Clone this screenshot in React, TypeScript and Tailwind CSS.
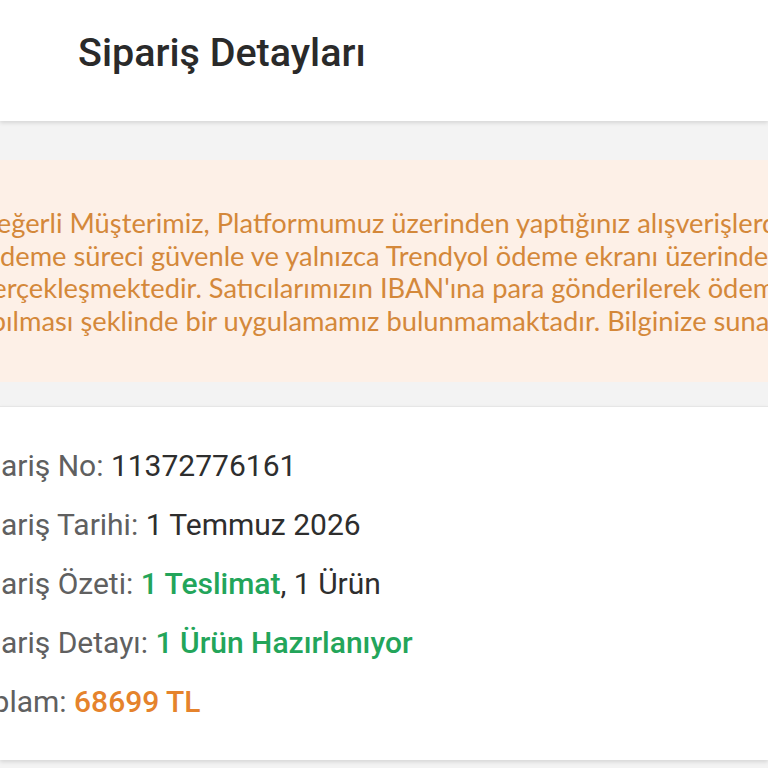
import React from 'react'

const rows = [
  { label: 'Sipariş No:', value: <span className="text-[#2e2e2e]">11372776161</span> },
  { label: 'Sipariş Tarihi:', value: <span className="text-[#2e2e2e]">1 Temmuz 2026</span> },
  {
    label: 'Sipariş Özeti:',
    value: (
      <>
        <span className="font-medium text-[#23a55a]">1 Teslimat</span>
        <span className="text-[#2e2e2e]">, 1 Ürün</span>
      </>
    ),
  },
  { label: 'Sipariş Detayı:', value: <span className="font-medium text-[#23a55a]">1 Ürün Hazırlanıyor</span> },
  { label: 'Toplam:', value: <span className="font-medium text-[#e5832c]">68699 TL</span> },
]

export default function App() {
  return (
    <div className="h-[768px] w-[768px] overflow-hidden bg-[#f3f3f3] font-['Roboto',sans-serif]">
      <header className="flex h-[121px] items-center bg-white pb-[16px] pl-[78px] shadow-[0_2px_4px_rgba(0,0,0,0.12)]">
        <h1 className="text-[39.5px] font-medium text-[#2a2a2a]">Sipariş Detayları</h1>
      </header>

      <div className="mt-[39px] -ml-[82px] flex h-[222px] w-[932px] items-center justify-center bg-[#fdf0e7]">
        <p className="whitespace-nowrap pt-[2px] text-center font-['Lato',sans-serif] text-[27.3px] leading-[32.5px] text-[#d4883a]">
          Değerli Müşterimiz, Platformumuz üzerinden yaptığınız alışverişlerde
          <br />
          ödeme süreci güvenle ve yalnızca Trendyol ödeme ekranı üzerinden
          <br />
          gerçekleşmektedir. Satıcılarımızın IBAN'ına para gönderilerek ödeme
          <br />
          yapılması şeklinde bir uygulamamız bulunmamaktadır. Bilginize sunarız.
        </p>
      </div>

      <section className="mt-[24px] h-[354px] border-t border-[#e6e6e6] bg-white shadow-[0_2px_4px_rgba(0,0,0,0.12)]">
        <div className="-ml-[41px] flex flex-col gap-[23px] pt-[41px] text-[30px] leading-[36px]">
          {rows.map((row) => (
            <div key={row.label} className="whitespace-nowrap">
              <span className="text-[#606060]">{row.label} </span>
              {row.value}
            </div>
          ))}
        </div>
      </section>
    </div>
  )
}
